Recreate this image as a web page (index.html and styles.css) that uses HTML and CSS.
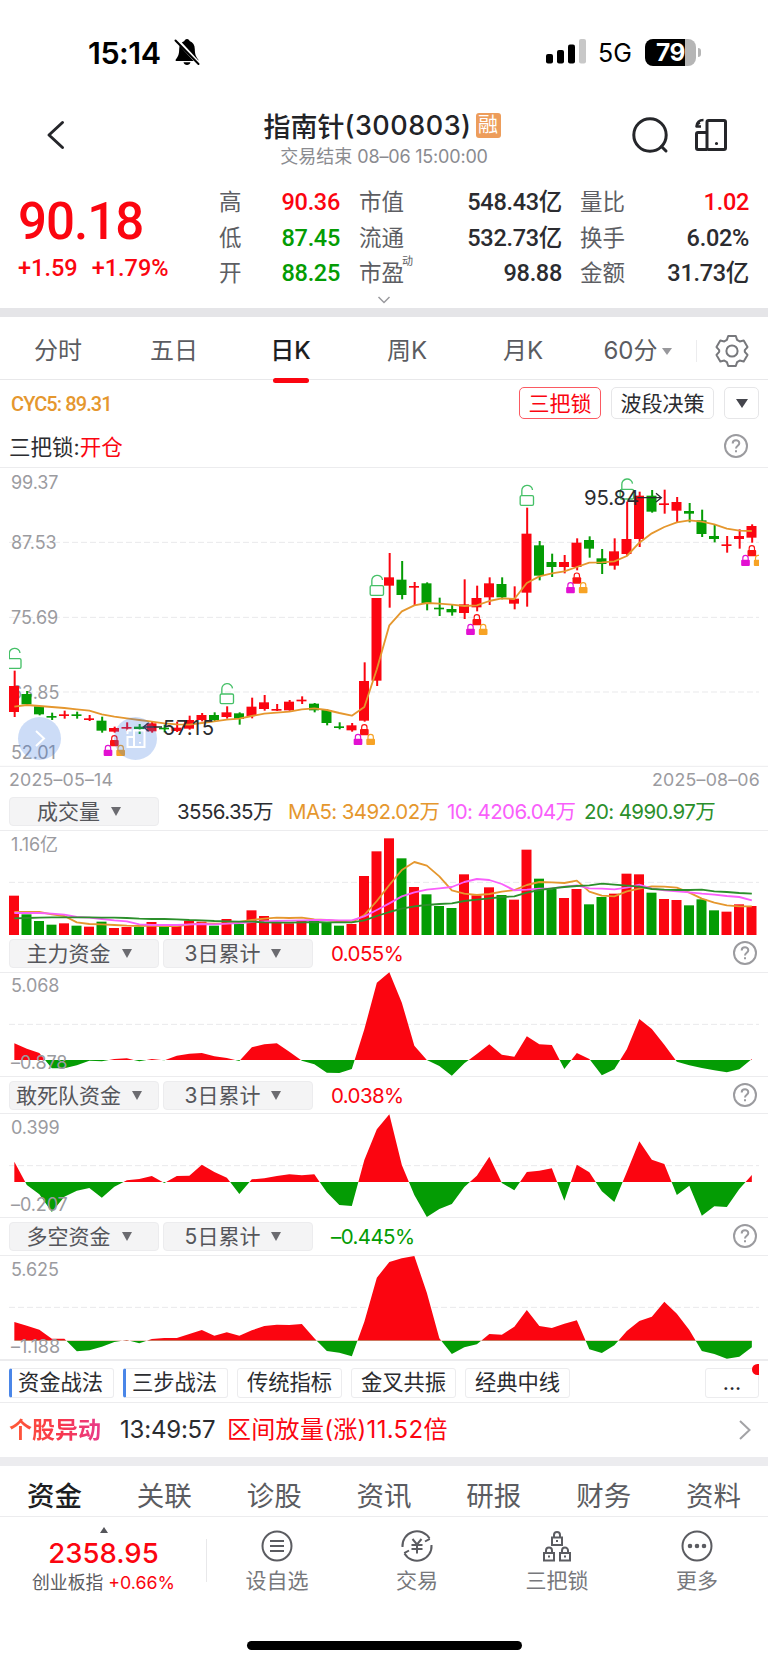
FILE: index.html
```html
<!DOCTYPE html>
<html lang="zh-CN">
<head>
<meta charset="UTF-8">
<title>指南针(300803)</title>
<link rel="stylesheet" href="styles.css">
</head>
<body>
<div class="status">
    <div class="time">15:14</div>
    <svg class="bell" width="28" height="30" viewBox="0 0 28 30">
        <path d="M14 2c-1.600 0-2.300 1-2.600 2C8 5.200 6.200 8 6.200 12c0 6-1.500 8-3.300 10.200-.7 1-.3 1.800.7 1.800h20.800c1 0 1.400-.8.700-1.800C23.300 20 21.800 18 21.800 12c0-4-1.800-6.800-5.200-8-.3-1-1-2-2.600-2z"/>
        <path d="M10.500 25.300h7c-.4 1.800-1.800 2.700-3.500 2.700s-3.100-.9-3.500-2.700z"/>
        <path d="M3.500 2.500l23 25" stroke="#fff" stroke-width="4"/>
        <path d="M2.500 3.500l23 23.500" stroke="#000" stroke-width="2" stroke-linecap="round"/>
    </svg>
    <svg class="signal" width="40" height="26" viewBox="0 0 40 26">
        <rect x="0" y="15" width="7" height="9.500" rx="2"/>
        <rect x="11" y="11" width="7" height="13.500" rx="2"/>
        <rect x="22" y="5.500" width="7" height="19" rx="2"/>
        <rect x="33" y="0" width="7" height="24.500" rx="2" fill="#c8c8c8"/>
    </svg>
    <div class="net">5G</div>
    <div class="battery"><span>79</span></div>
</div>

<header class="header">
    <svg class="back" width="20" height="30" viewBox="0 0 20 30"><path d="M16.500 2.500L3 15l13.500 12.500" /></svg>
    <div class="title">
        <h1>指南针<b>(300803)</b><i>融</i></h1>
        <p>交易结束 <span>08–06 15:00:00</span></p>
    </div>
    <svg class="search" width="38" height="38" viewBox="0 0 38 38"><circle cx="18" cy="18" r="16.200"/><path d="M29.500 29.500l4.500 4.500" stroke-linecap="round"/></svg>
    <svg class="layout" width="34" height="34" viewBox="0 0 34 34">
        <rect x="13" y="2.500" width="18.500" height="29" rx="1.500"/>
        <path d="M13 31.500H4a1.500 1.500 0 0 1-1.500-1.500V16A1.500 1.500 0 0 1 4 14.500h9"/>
        <path d="M9.500 2C5.500 2 3 3.500 2.500 8.500h4.500M2.500 8.500C3 6 4 5 6 4.500" stroke-width="2.600"/>
        <circle cx="22.500" cy="25.500" r="0.800" stroke-width="1.600"/>
    </svg>
</header>

<section class="quote">
    <div class="last">
        <div class="price">90.18</div>
        <div class="change"><span>+1.59</span><span>+1.79%</span></div>
    </div>
    <dl class="stats">
        <dt>高</dt><dd class="red">90.36</dd><dt>市值</dt><dd>548.43亿</dd><dt>量比</dt><dd class="red">1.02</dd>
        <dt>低</dt><dd class="green">87.45</dd><dt>流通</dt><dd>532.73亿</dd><dt>换手</dt><dd>6.02%</dd>
        <dt>开</dt><dd class="green">88.25</dd><dt>市盈<sup>动</sup></dt><dd>98.88</dd><dt>金额</dt><dd>31.73亿</dd>
    </dl>
    <svg class="fold" width="14" height="8" viewBox="0 0 14 8"><path d="M1.500 1L7 6.500 12.500 1"/></svg>
</section>

<nav class="periods">
    <a>分时</a>
    <a>五日</a>
    <a class="on">日K</a>
    <a>周K</a>
    <a>月K</a>
    <a class="minute">60分<span class="caret"></span></a>
    <div class="setting">
        <svg width="34" height="34" viewBox="0 0 34 34">
            <path d="M13.200 2h7.600l1.300 3.900 2.600 1.500 4-.8 3.800 6.500-2.700 3.100v1.600l2.700 3.100-3.800 6.500-4-.8-2.600 1.500-1.300 3.900h-7.600l-1.300-3.900-2.600-1.500-4 .8-3.800-6.500 2.700-3.100v-1.600l-2.700-3.100 3.800-6.500 4 .8 2.600-1.500z"/>
            <circle cx="17" cy="17" r="5.600"/>
        </svg>
    </div>
</nav>

<div class="indicator">
    <div class="cyc">CYC5: 89.31</div>
    <div class="chip hot">三把锁</div>
    <div class="chip wave">波段决策</div>
    <div class="chip drop"><span class="caret dark"></span></div>
</div>
<div class="signal-row">
    <div>三把锁:<span class="red">开仓</span></div>
    <svg class="help" width="26" height="26" viewBox="0 0 26 26"><circle cx="13" cy="13" r="11"/><path d="M9.700 10.500c0-4.200 6.600-4.200 6.600-.2 0 2.400-3.300 2.600-3.300 5.200M13 17.300v1.900"/></svg>
</div>

<div class="kline">
    <svg id="kline" class="chart" viewBox="0 21 2304 900"></svg>
    <div class="float next"><svg width="43" height="43" viewBox="0 0 43 43"><path d="M18 14l8 7.500-8 7.500"/></svg></div>
    <div class="float switch"><svg width="43" height="43" viewBox="0 0 43 43"><path d="M20 30V13.500h10.500V30h-17V20H20M13.500 17v-3.500h4M26 25v1.500"/></svg></div>
</div>
<div class="dates"><span>2025–05–14</span><span>2025–08–06</span></div>

<div class="panel-head volume">
    <div class="select">成交量<span class="caret"></span></div>
    <div class="values"><span>3556.35万</span><span class="ma5">MA5: 3492.02万</span><span class="ma10">10: 4206.04万</span><span class="ma20">20: 4990.97万</span></div>
</div>
<svg id="volume" class="chart" viewBox="0 120 2304 315"></svg>

<div class="panel-head">
    <div class="select">主力资金<span class="caret"></span></div>
    <div class="select">3日累计<span class="caret"></span></div>
    <div class="values red">0.055%</div>
    <svg class="help" width="26" height="26" viewBox="0 0 26 26"><circle cx="13" cy="13" r="11"/><path d="M9.700 10.500c0-4.200 6.600-4.200 6.600-.2 0 2.400-3.300 2.600-3.300 5.200M13 17.300v1.900"/></svg>
</div>
<svg id="flow1" class="chart" viewBox="0 546 2304 315"></svg>

<div class="panel-head short">
    <div class="select">敢死队资金<span class="caret"></span></div>
    <div class="select">3日累计<span class="caret"></span></div>
    <div class="values red">0.038%</div>
    <svg class="help" width="26" height="26" viewBox="0 0 26 26"><circle cx="13" cy="13" r="11"/><path d="M9.700 10.500c0-4.200 6.600-4.200 6.600-.2 0 2.400-3.300 2.600-3.300 5.200M13 17.300v1.900"/></svg>
</div>
<svg id="flow2" class="chart" viewBox="0 99 2304 315"></svg>

<div class="panel-head">
    <div class="select">多空资金<span class="caret"></span></div>
    <div class="select">5日累计<span class="caret"></span></div>
    <div class="values green">–0.445%</div>
    <svg class="help" width="26" height="26" viewBox="0 0 26 26"><circle cx="13" cy="13" r="11"/><path d="M9.700 10.500c0-4.200 6.600-4.200 6.600-.2 0 2.400-3.300 2.600-3.300 5.200M13 17.300v1.900"/></svg>
</div>
<svg id="flow3" class="chart" viewBox="0 525 2304 315"></svg>

<div class="tags">
    <span class="mark">资金战法</span>
    <span class="mark">三步战法</span>
    <span>传统指标</span>
    <span>金叉共振</span>
    <span>经典中线</span>
    <span class="more">...</span>
</div>

<div class="event">
    <strong>个股异动</strong>
    <time>13:49:57</time>
    <span class="red">区间放量(涨)11.52倍</span>
    <svg width="14" height="24" viewBox="0 0 14 24"><path d="M2 3l9.500 9L2 21"/></svg>
</div>

<nav class="sections">
    <a class="on">资金</a><a>关联</a><a>诊股</a><a>资讯</a><a>研报</a><a>财务</a><a>资料</a>
</nav>

<footer class="toolbar">
    <div class="index">
        <div class="up"></div>
        <div class="point">2358.95</div>
        <div class="name">创业板指 <span class="red">+0.66%</span></div>
    </div>
    <a>
        <svg width="34" height="34" viewBox="0 0 34 34"><circle cx="17" cy="17" r="14.500"/><path d="M10 12h14M10 17h14M10 22h14"/></svg>
        设自选
    </a>
    <a>
        <svg width="34" height="34" viewBox="0 0 34 34"><path d="M2.500 18A14.500 14.500 0 0 1 29.500 9.500M29.800 9.800l-4.800 2.700M31.500 16A14.500 14.500 0 0 1 4.500 24.500M4.200 24.200l4.800-2.700M12.500 10l4.500 5.500 4.500-5.500M17 15.500V24.500M11.500 16h11M11.500 20h11"/></svg>
        交易
    </a>
    <a>
        <svg width="34" height="34" viewBox="0 0 34 34"><path d="M12 8.500h10v7.500H12zM14 8.500V6a3 3 0 0 1 6 0v2.500M17 11v2M4 24h10v7.500H4zM6 24v-2.500a3 3 0 0 1 6 0V24M9 26.500v2M20 24h10v7.500H20zM22 24v-2.500a3 3 0 0 1 6 0V24M25 26.500v2"/></svg>
        三把锁
    </a>
    <a>
        <svg width="34" height="34" viewBox="0 0 34 34"><circle cx="17" cy="17" r="14.500"/><path d="M10 17h.01M17 17h.01M24 17h.01" stroke-width="4.600" stroke-linecap="round"/></svg>
        更多
    </a>
</footer>
<div class="home"></div>
<script src="script.js"></script>
</body>
</html>
```
FILE: styles.css
```css
* {
    box-sizing: border-box;
}
body {
    margin: 0;
    width: 768px;
    height: 1665px;
    overflow: hidden;
    background: #fff;
    color: #2b2c30;
    font-family: Inter, "Noto Sans CJK SC", sans-serif;
    font-size: 21px;
}
svg {
    display: block;
    flex: none;
    fill: none;
}
h1, p, dl, dd {
    margin: 0;
}
.red {
    color: #fb0510;
}
.green {
    color: #049c04;
}
.caret {
    display: inline-block;
    border: 5px solid transparent;
    border-top: 9px solid #6b6b70;
    border-bottom: 0;
}

/* 状态栏 */
.status {
    display: flex;
    align-items: center;
    height: 104px;
    padding: 0 68px 0 88px;
    color: #000;
}
.time {
    width: 85px;
    font: 600 30.5px Inter, sans-serif;
    letter-spacing: -0.5px;
}
.bell {
    fill: #000;
}
.signal {
    margin-left: auto;
    fill: #000;
}
.net {
    width: 47px;
    margin-left: 12px;
    font-size: 25px;
    line-height: 30px;
    padding-top: 2px;
}
.battery {
    position: relative;
    width: 51px;
    height: 27px;
    border-radius: 8px;
    background: linear-gradient(to right, #000 79%, #b5b5b5 79%);
    color: #fff;
    text-align: center;
    font: 700 24.5px/26px Inter, sans-serif;
    letter-spacing: -0.5px;
    margin-right: 4px;
}
.battery::after {
    content: "";
    position: absolute;
    right: -5px;
    top: 9px;
    width: 3px;
    height: 9px;
    border-radius: 0 3px 3px 0;
    background: #b5b5b5;
}

/* 标题 */
.header {
    display: flex;
    height: 74px;
    padding: 0 40px 0 46px;
    stroke: #25262a;
    stroke-width: 3;
}
.back {
    margin-top: 16px;
    stroke-linecap: round;
    stroke-linejoin: round;
}
.title {
    width: 470px;
    margin-left: 83px;
    text-align: center;
}
h1 {
    display: flex;
    justify-content: center;
    align-items: center;
    height: 42px;
    margin-right: 4px;
    font-size: 27px;
    font-weight: 500;
    color: #222327;
}
h1 b {
    font: 500 27px Inter, sans-serif;
    letter-spacing: 0.5px;
}
h1 i {
    width: 25px;
    height: 25px;
    margin-left: 4px;
    border-radius: 3px;
    background: #ed9d5b;
    color: #fff;
    font-size: 20px;
    font-style: normal;
    font-weight: 400;
    line-height: 24px;
}
.title p {
    font-size: 18px;
    line-height: 22px;
    color: #8a8b90;
}
.title p span {
    letter-spacing: -0.2px;
}
.search {
    margin: 13px 0 0 13px;
}
.layout {
    margin: 14px 0 0 24px;
    stroke-linejoin: round;
}

/* 报价 */
.quote {
    position: relative;
    display: flex;
    height: 139px;
    padding-left: 18px;
    border-bottom: 9px solid #e5e5e8;
    font-family: Roboto, "Noto Sans CJK SC", sans-serif;
}
.last {
    width: 201px;
    color: #fb0510;
    font-weight: 500;
}
.price {
    margin-top: 14px;
    font-size: 51px;
    line-height: 60px;
    letter-spacing: -1px;
}
.change {
    display: flex;
    gap: 14px;
    margin-top: 1px;
    font-size: 23.5px;
    line-height: 30px;
}
.stats {
    display: grid;
    grid-template-columns: 46px 75px 73px 149px 76px 111px;
    grid-auto-rows: 35.7px;
    margin-top: 7px;
    line-height: 35px;
    font-size: 23.5px;
    font-weight: 500;
}
.stats dt {
    font-size: 22.5px;
    font-weight: 400;
    color: #5d5e63;
    white-space: nowrap;
}
.stats dt:nth-of-type(3n+2) {
    padding-left: 19px;
}
.stats dt:nth-of-type(3n) {
    padding-left: 18px;
}
.stats dd {
    text-align: right;
    white-space: nowrap;
    letter-spacing: -0.3px;
}
.stats sup {
    position: absolute;
    top: 66px;
    margin-left: -2px;
    font-size: 11px;
}
.fold {
    position: absolute;
    left: 377px;
    top: 118px;
    stroke: #9a9a9e;
    stroke-width: 1.500;
}

/* 周期 */
.periods {
    display: grid;
    grid-template-columns: 116px 116px 117px 116px 116px 115px 72px;
    align-items: center;
    height: 63px;
    border-bottom: 1px solid #e8e8ea;
    font-size: 24px;
    color: #5b5c61;
}
.periods a {
    position: relative;
    line-height: 68px;
    text-align: center;
}
.periods .on {
    color: #1d1e22;
    font-weight: 500;
}
.periods .on::after {
    content: "";
    position: absolute;
    left: 41px;
    bottom: 2px;
    width: 36px;
    height: 5px;
    border-radius: 3px;
    background: #fb0510;
}
.minute {
    display: flex;
    justify-content: center;
    align-items: center;
    gap: 4px;
    padding-right: 2px;
}
.minute .caret {
    border-top: 7px solid #98989c;
}
.setting {
    padding-left: 18px;
    border-left: 1px solid #ececee;
    stroke: #77787c;
    stroke-width: 2;
    stroke-linejoin: round;
}
.setting svg {
    margin: -6px 0;
}

/* 指标 */
.indicator {
    display: flex;
    gap: 10px;
    height: 47px;
    padding: 7px 9px 0 11px;
}
.cyc {
    margin-right: auto;
    font: 500 20px/34px Roboto, sans-serif;
    letter-spacing: -0.9px;
    color: #e5972e;
}
.chip {
    height: 32px;
    border: 1px solid #e6e6e8;
    border-radius: 5px;
    line-height: 31px;
    text-align: center;
}
.hot {
    width: 82px;
    border-color: #fb5a62;
    color: #fb0510;
}
.wave {
    width: 103px;
}
.drop {
    display: flex;
    align-items: center;
    justify-content: center;
    width: 35px;
}
.drop .caret {
    border-width: 9px 6px 0;
    border-top-color: #44454c;
}
.signal-row {
    display: flex;
    justify-content: space-between;
    align-items: center;
    height: 40px;
    padding: 0 19px 0 9px;
    font-size: 21.5px;
    line-height: 38px;
}
.signal-row .help {
    margin-top: -2px;
}
.help {
    stroke: #9b9b9f;
    stroke-width: 2;
}

/* 图表 */
.chart {
    width: 768px;
    font-size: 54px;
    letter-spacing: -0.3px;
}
.kline {
    position: relative;
}
.float {
    position: absolute;
    top: 250px;
    width: 43px;
    height: 43px;
    border-radius: 50%;
    background: rgba(51, 115, 223, 0.25);
    stroke: #fff;
    stroke-width: 2;
}
.next {
    left: 18px;
}
.switch {
    left: 114px;
}
.dates {
    display: flex;
    justify-content: space-between;
    height: 26px;
    padding: 0 8px 0 9px;
    font-size: 17.8px;
    line-height: 26px;
    letter-spacing: 0.2px;
    color: #9b9b9f;
}
.panel-head {
    display: flex;
    gap: 4px;
    height: 37px;
    padding: 4px 10px 0 9px;
}
.short {
    height: 36px;
}
.select {
    display: flex;
    align-items: center;
    justify-content: center;
    gap: 11px;
    width: 150px;
    height: 29px;
    padding-right: 10px;
    border: 1px solid #ececee;
    border-radius: 4px;
    background: #f4f4f5;
    color: #55565b;
    line-height: 26px;
}
.values {
    display: flex;
    flex: 1;
    margin-left: 14px;
    font-size: 20.5px;
    line-height: 29px;
    letter-spacing: -0.6px;
    white-space: nowrap;
}
.values span {
    width: 111px;
}
.values .ma5 {
    width: 159px;
    color: #e5972e;
}
.values .ma10 {
    width: 137px;
    color: #f95ffb;
}
.values .ma20 {
    width: 140px;
    color: #2b8f2b;
}
.panel-head .help {
    margin-top: 1px;
}

/* 战法标签 */
.tags {
    display: flex;
    gap: 9px;
    height: 43px;
    padding: 7px 9px 0;
    border-top: 1px solid #ececee;
    border-bottom: 1px solid #ececee;
}
.tags span {
    width: 105px;
    height: 30px;
    border: 1px solid #ececee;
    border-radius: 3px;
    font-size: 21.3px;
    line-height: 27px;
    text-align: center;
}
.tags .mark {
    border-left: 3px solid #4a86e8;
    padding-right: 4px;
}
.tags .more {
    position: relative;
    width: 54px;
    margin-left: auto;
}
.more::after {
    content: "";
    position: absolute;
    right: -1px;
    top: -5px;
    width: 7px;
    height: 11px;
    border-radius: 6px 0 0 6px;
    background: #fb0510;
}

.event {
    display: flex;
    align-items: center;
    height: 63px;
    padding: 0 16px 0 9px;
    border-bottom: 9px solid #ececef;
    font-size: 24px;
    line-height: 54px;
    letter-spacing: 0.3px;
}
.event strong {
    width: 111px;
    font-size: 23px;
    letter-spacing: 0;
    background: linear-gradient(to right, #ff5a36 0, #f8374a 50px, #e83a8c 92px);
    -webkit-background-clip: text;
    background-clip: text;
    color: transparent;
}
.event time {
    width: 107px;
    letter-spacing: -0.2px;
}
.event svg {
    margin-left: auto;
    stroke: #a3a3a6;
    stroke-width: 2;
}

/* 底部 */
.sections {
    display: flex;
    justify-content: space-between;
    height: 51px;
    padding: 0 27px;
    border-bottom: 1px solid #ececee;
    font-size: 27.5px;
    line-height: 60px;
    color: #5b5c61;
}
.sections .on {
    color: #1d1e22;
    font-weight: 500;
}
.toolbar {
    display: flex;
    height: 124px;
    color: #77787c;
}
.toolbar a {
    display: flex;
    flex-direction: column;
    align-items: center;
    width: 140px;
    padding-top: 12px;
    line-height: 36px;
}
.toolbar a svg {
    stroke: #5b5c61;
    stroke-width: 2;
}
.index {
    position: relative;
    width: 207px;
    text-align: center;
}
.index::after {
    content: "";
    position: absolute;
    right: 0;
    top: 22px;
    width: 1px;
    height: 43px;
    background: #e8e8ea;
}
.up {
    width: 8px;
    margin: 10px auto 0;
    border: 4px solid transparent;
    border-top: 0;
    border-bottom: 6px solid #55565b;
}
.point {
    font: 500 27.5px/40px Inter, sans-serif;
    color: #fb0510;
}
.name {
    font-size: 17.8px;
    line-height: 20px;
    color: #5b5c61;
}
.home {
    width: 275px;
    height: 9px;
    margin: 0 auto;
    border-radius: 5px;
    background: #000;
}
```
FILE: script.js
```js
const RED = '#fb0510', GREEN = '#049c04', ORANGE = '#e5972e';
const x = i => 43 + i * 37.5;

// 最高, 实体上沿, 实体下沿, 最低, 涨跌
const candles = [
    [632,678,756,771,1],[693,702,733,735,0],[738,739,763,766,0],[758,768,773,780,0],[752,763,768,776,1],[755,763,768,776,0],
    [765,775,780,783,1],[770,782,812,818,0],[800,804,815,818,1],[787,801,806,813,1],[792,800,807,822,0],[785,790,814,818,1],
    [794,803,808,817,0],[785,803,813,816,1],[767,780,806,809,1],[759,765,780,784,1],[757,765,780,784,0],[739,757,771,776,1],
    [757,760,777,794,0],[713,740,768,775,1],[705,727,747,752,1],[732,747,752,753,1],[720,725,751,752,1],[709,719,724,732,1],
    [729,731,751,757,0],[748,750,789,796,0],[787,799,804,808,0],[789,796,811,815,1],[607,663,782,785,1],[414,414,662,678,1],
    [279,352,377,443,1],[303,359,405,418,0],[366,378,383,436,1],[367,370,429,451,0],[413,443,448,468,0],[433,447,457,467,0],
    [358,433,459,477,1],[377,414,442,454,1],[352,370,412,435,1],[352,372,412,418,0],[379,416,431,448,1],[143,221,398,440,1],
    [243,256,347,361,0],[281,306,321,351,0],[285,306,321,340,1],[235,248,321,331,1],[229,240,266,293,0],[267,295,312,342,0],
    [235,274,317,329,1],[125,237,282,287,1],[95,107,237,261,1],[90,107,155,158,0],[89,130,135,161,1],[111,126,152,187,1],
    [129,153,161,187,0],[149,181,222,231,0],[195,228,237,247,0],[228,253,258,278,1],[208,228,237,266,1],[193,198,233,248,1]
];
const cyc = [740,735,738,741,744,748,752,763,770,775,780,785,790,793,794,789,784,779,776,768,761,758,755,748,745,750,759,767,741,628,496,454,436,429,431,434,438,436,423,415,417,369,349,340,334,321,308,307,304,288,248,220,201,187,181,185,193,206,212,213];

const volumes = [317,373,393,404,400,407,410,395,414,411,411,396,409,408,392,395,407,387,402,361,378,397,400,393,391,397,407,402,258,184,145,205,291,313,348,354,253,316,292,315,329,179,266,297,324,297,343,321,311,251,253,308,327,330,346,328,361,365,343,348];
const ma5 = [366,366,366,373,378,397,402,403,405,407,408,407,408,408,404,400,401,400,396,390,386,383,384,383,388,390,394,397,375,333,285,240,216,227,259,301,311,315,312,305,300,285,276,277,279,272,305,317,319,304,296,289,290,293,308,326,338,346,349,349];
const ma10 = [369,369,369,371,374,381,383,387,391,394,403,405,405,405,403,402,403,401,399,396,394,393,392,391,390,390,391,391,379,360,340,319,307,299,295,291,276,267,270,282,301,299,296,295,290,286,295,296,298,293,284,296,301,304,307,311,314,318,321,331];
const ma20 = [385,384,383,382,382,382,382,383,383,384,386,387,387,388,390,391,393,394,395,395,397,398,398,397,396,397,397,397,391,378,366,356,349,345,342,340,333,329,325,321,319,308,300,295,291,288,286,281,284,287,290,297,299,300,300,299,304,306,309,311];

const flow1 = [760,776,789,835,835,826,812,814,807,805,814,807,811,797,791,789,799,804,813,772,763,760,785,812,823,848,849,837,718,578,547,638,767,810,828,857,820,792,763,794,800,739,763,765,837,789,807,856,838,778,687,717,764,815,826,834,841,847,838,807];
const flow2 = [245,315,343,396,350,332,324,353,320,301,297,288,309,288,287,254,276,293,342,298,295,288,283,286,283,337,375,378,240,148,103,255,345,411,387,372,321,287,230,309,331,276,272,265,362,254,277,334,366,276,184,239,252,345,317,407,379,381,327,285];
const flow3 = [726,737,749,776,776,814,811,800,786,780,790,777,774,774,762,750,767,757,767,751,738,734,735,732,775,813,818,829,725,593,546,535,528,638,775,822,802,793,762,764,740,690,738,744,731,721,808,819,796,753,723,710,665,701,750,813,822,836,830,802];

function frame(y) {
    return `<path d="M0 ${y}H2304" stroke="#ececee" stroke-width="3"/>`;
}
function grid(y) {
    return `<path d="M27 ${y}H2277" stroke="#e9e9eb" stroke-width="3" stroke-dasharray="18 9"/>`;
}
function label(text, y) {
    return `<text x="33" y="${y}" fill="#9b9b9f">${text}</text>`;
}
function line(data, color) {
    const points = data.map((y, i) => x(i) + ',' + y).join(' ');
    return `<polyline points="${points}" stroke="${color}" stroke-width="5.500" stroke-linejoin="round"/>`;
}
function lock(cx, y, color) {
    return `<path d="M${cx - 8} ${y + 16}v-6a8 8 0 0 1 16 0v6" stroke="${color}" stroke-width="3.500"/>` +
        `<rect x="${cx - 13}" y="${y + 15}" width="26" height="19" rx="3" fill="${color}"/>`;
}
function locks(i, y) {
    return lock(x(i), y, '#fb1212') + lock(x(i) - 19, y + 29, '#e210d2') + lock(x(i) + 19, y + 29, '#f7a325');
}
function openLock(i, y) {
    const c = x(i);
    return `<path d="M${c - 15} ${y + 30}V${y + 16}a16 15 0 0 1 32 -2" stroke="#45c067" stroke-width="4"/>` +
        `<rect x="${c - 20}" y="${y + 31}" width="40" height="29" rx="4" stroke="#45c067" stroke-width="4"/>`;
}

function drawKline() {
    let s = frame(22.5) + grid(247) + grid(472) + grid(696) + frame(919);
    s += label('99.37', 86) + label('87.53', 268) + label('75.69', 492) + label('63.85', 718) + label('52.01', 898);
    s += '<clipPath id="plot"><rect x="27" y="0" width="2250" height="920"/></clipPath><g clip-path="url(#plot)">';
    candles.forEach(([high, top, bottom, low, up], i) => {
        const color = up ? RED : GREEN;
        s += `<rect x="${x(i) - 2}" y="${high}" width="6" height="${low - high}" fill="${color}"/>`;
        s += `<rect x="${x(i) - 16}" y="${top}" width="30" height="${bottom - top}" fill="${color}"/>`;
    });
    s += line(cyc, ORANGE);
    s += locks(8, 825) + locks(28, 792) + locks(37, 462) + locks(45, 337) + locks(59, 255);
    s += openLock(0, 565) + openLock(17, 671) + openLock(29, 346) + openLock(41, 76) + openLock(49, 57);
    s += '</g>';
    s += '<g fill="#2b2c30" font-size="61"><text x="488" y="824" letter-spacing="4">57.15</text><text x="1752" y="136">95.84</text></g>';
    s += '<path d="M486 801H432M446 788l-16 13 16 13M1912 113h70M1968 100l16 13-16 13" stroke="#2b2c30" stroke-width="4"/>';
    document.getElementById('kline').innerHTML = s;
}

function drawVolume() {
    let s = frame(121.5) + grid(277) + label('1.16亿', 184);
    volumes.forEach((y, i) => {
        s += `<rect x="${x(i) - 16}" y="${y}" width="30" height="${436 - y}" fill="${candles[i][4] ? RED : GREEN}"/>`;
    });
    s += line(ma5, ORANGE) + line(ma10, '#f95ffb') + line(ma20, '#2b8f2b');
    document.getElementById('volume').innerHTML = s;
}

// 零轴以上红色, 以下绿色
function drawFlow(id, data, top, zero, mid, max, maxY, min, minY) {
    const points = `${x(0)},${zero} ` + data.map((y, i) => x(i) + ',' + y).join(' ') + ` ${x(59)},${zero}`;
    document.getElementById(id).innerHTML = frame(top + 1.5) + frame(top + 313.5) + grid(mid) +
        `<clipPath id="${id}-up"><rect x="0" y="${top}" width="2304" height="${zero - top}"/></clipPath>` +
        `<clipPath id="${id}-down"><rect x="0" y="${zero}" width="2304" height="200"/></clipPath>` +
        `<polygon points="${points}" fill="${RED}" clip-path="url(#${id}-up)"/>` +
        `<polygon points="${points}" fill="${GREEN}" clip-path="url(#${id}-down)"/>` +
        label(max, maxY) + label(min, minY);
}

drawKline();
drawVolume();
drawFlow('flow1', flow1, 546, 810, 703, '5.068', 606, '–0.878', 838);
drawFlow('flow2', flow2, 99, 306, 257, '0.399', 161, '–0.207', 393);
drawFlow('flow3', flow3, 525, 782, 682, '5.625', 587, '–1.188', 820);
```
